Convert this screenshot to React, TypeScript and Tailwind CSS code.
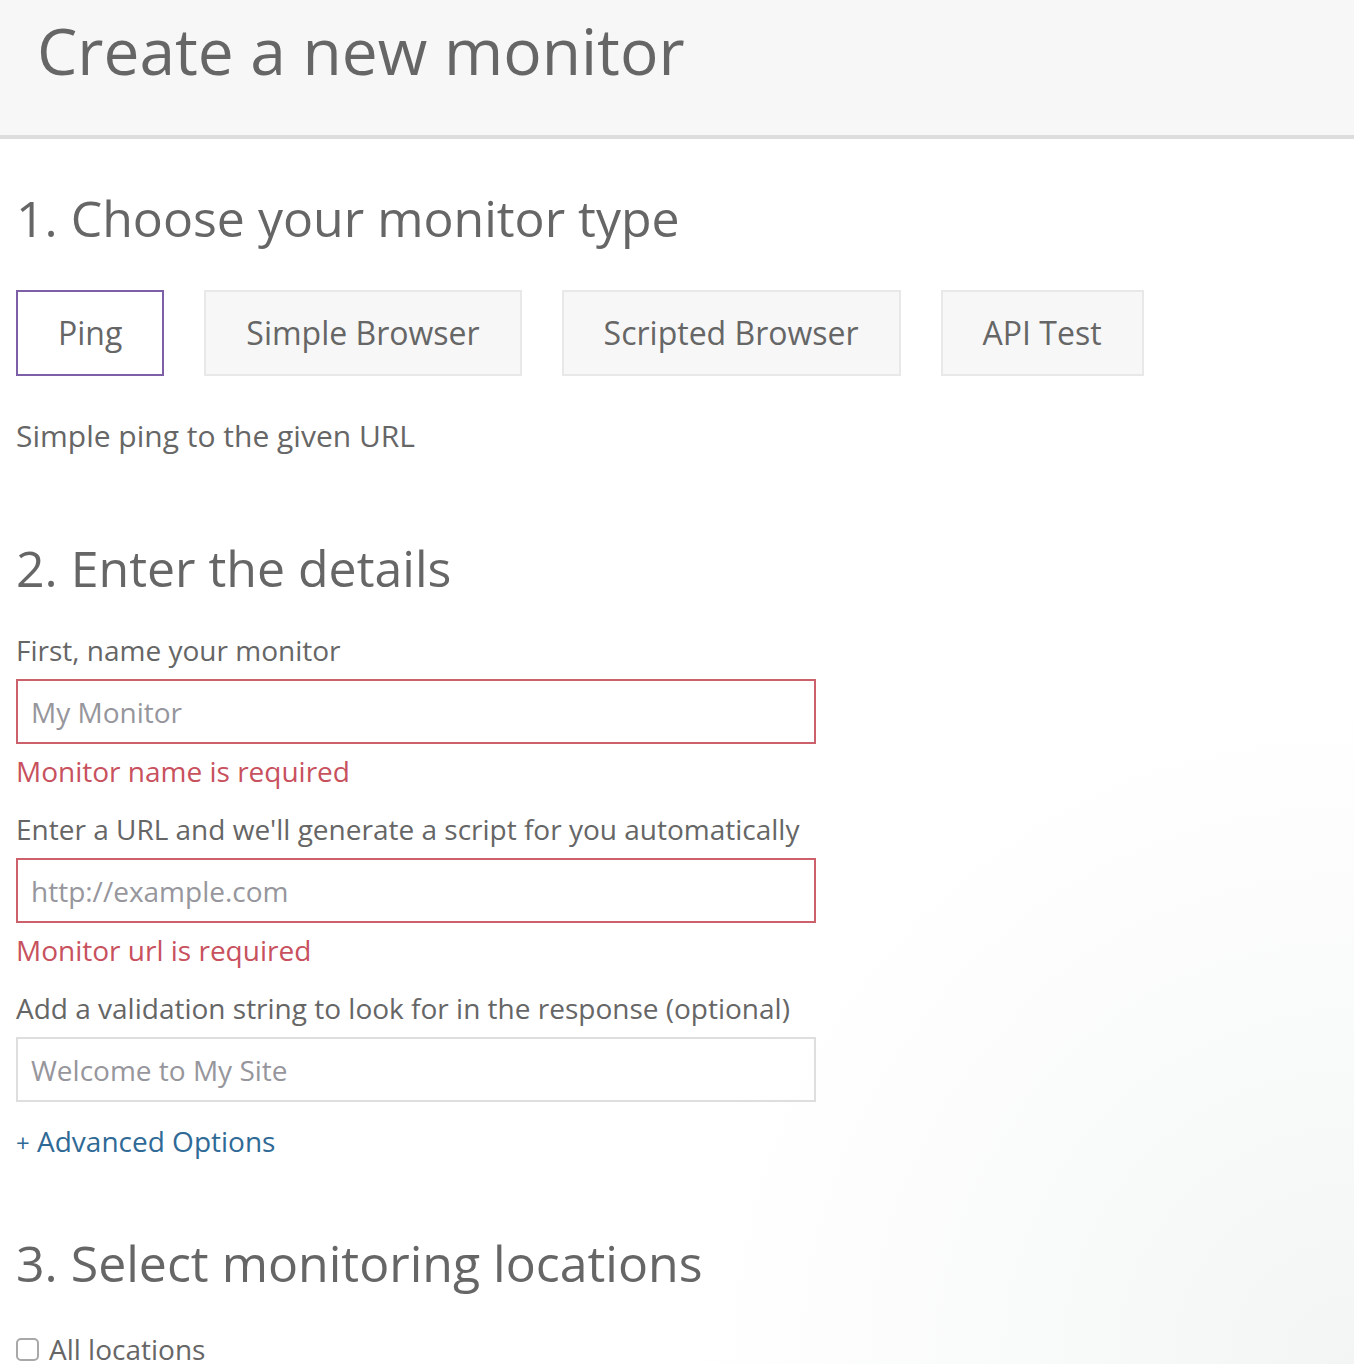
import React from "react";

const F = { fontFamily: '"Open Sans", "Noto Sans", sans-serif' };

function MonitorButton({ label, active }: { label: string; active?: boolean }) {
  return (
    <div
      className={
        "h-[86px] px-[40px] flex items-center justify-center border-2 text-[32px] leading-none text-[#666666] " +
        (active ? "bg-white border-[#7c5fa6]" : "bg-[#f7f7f7] border-[#e8e8e8]")
      }
    >
      {label}
    </div>
  );
}

function Field({
  label,
  placeholder,
  error,
  labelMt,
}: {
  label: string;
  placeholder: string;
  error?: string;
  labelMt: string;
}) {
  return (
    <div className={labelMt}>
      <div className="text-[28px] leading-none text-[#666666]">{label}</div>
      <input
        className={
          "mt-[15px] block w-[800px] h-[65px] border-2 px-[13px] text-[28px] text-[#666666] outline-none placeholder:text-[#96969c] " +
          (error ? "border-[#cc616c]" : "border-[#dedede]")
        }
        style={F}
        placeholder={placeholder}
      />
      {error && <div className="mt-[13px] text-[28px] leading-none text-[#c8515e]">{error}</div>}
    </div>
  );
}

export default function App() {
  return (
    <div
      className="min-h-[1364px] overflow-hidden bg-white bg-[radial-gradient(ellipse_at_100%_100%,#f3f5f5_0%,#ffffff_35%)]"
      style={F}
    >
      <div className="h-[139px] bg-[#f7f7f7] border-b-4 border-[#dddddd] pl-[37px] pt-[19px]">
        <h1 className="text-[64px] leading-none text-[#666666]">Create a new monitor</h1>
      </div>
      <div className="pl-[16px]">
        <h2 className="mt-[54px] text-[50px] leading-none text-[#666666]">1. Choose your monitor type</h2>
        <div className="mt-[47px] flex gap-[40px]">
          <MonitorButton label="Ping" active />
          <MonitorButton label="Simple Browser" />
          <MonitorButton label="Scripted Browser" />
          <MonitorButton label="API Test" />
        </div>
        <p className="mt-[45px] text-[30px] leading-none text-[#666666]">Simple ping to the given URL</p>
        <h2 className="mt-[92px] text-[50px] leading-none text-[#666666]">2. Enter the details</h2>
        <Field
          labelMt="mt-[43px]"
          label="First, name your monitor"
          placeholder="My Monitor"
          error="Monitor name is required"
        />
        <Field
          labelMt="mt-[30px]"
          label="Enter a URL and we'll generate a script for you automatically"
          placeholder="http://example.com"
          error="Monitor url is required"
        />
        <Field
          labelMt="mt-[30px]"
          label="Add a validation string to look for in the response (optional)"
          placeholder="Welcome to My Site"
        />
        <a className="mt-[25px] block text-[28px] leading-none text-[#2f6a96]">
          <span className="text-[24px]">+</span> Advanced Options
        </a>
        <h2 className="mt-[83px] text-[50px] leading-none text-[#666666]">3. Select monitoring locations</h2>
        <label className="mt-[47px] flex items-center gap-[10px] text-[28px] leading-none text-[#666666]">
          <span className="w-[23px] h-[23px] rounded-[5px] border-2 border-[#a8a8a8] bg-white"></span>
          All locations
        </label>
      </div>
    </div>
  );
}
